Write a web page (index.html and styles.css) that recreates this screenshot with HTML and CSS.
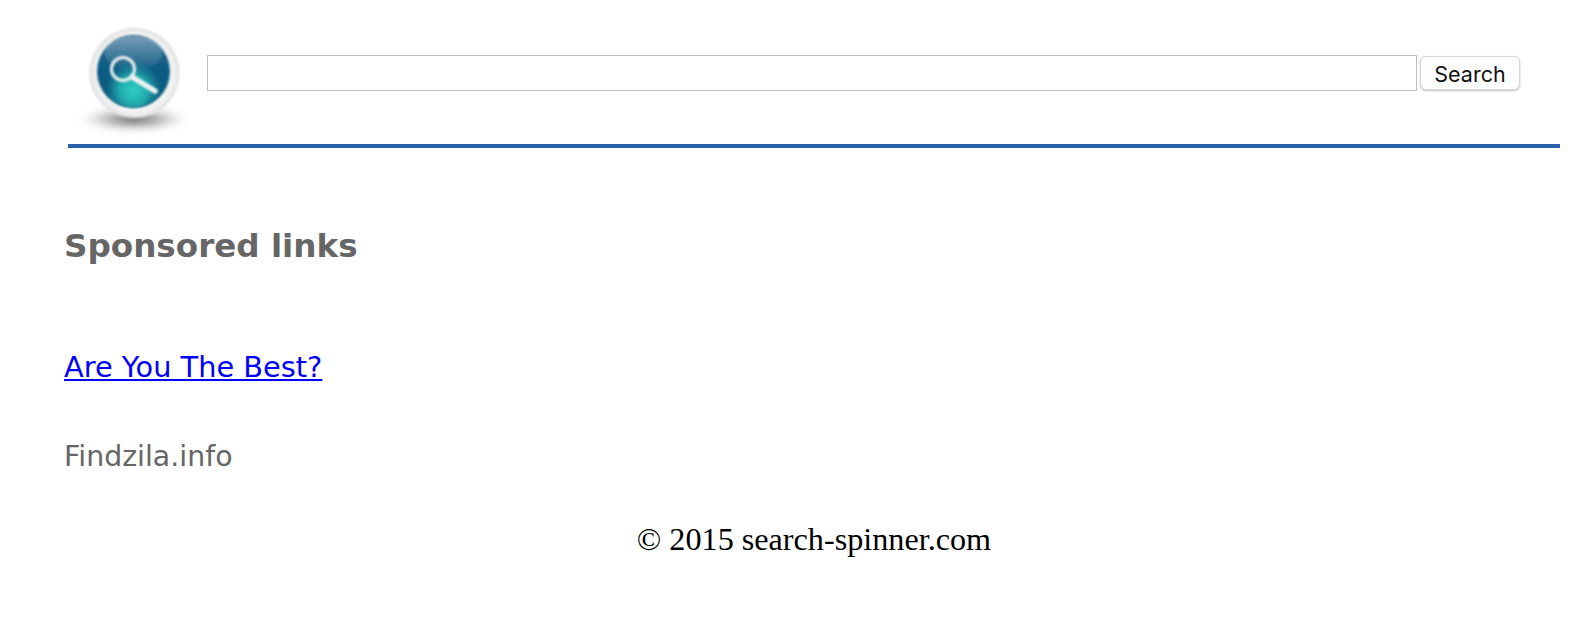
FILE: index.html
```html
<!DOCTYPE html>
<html lang="en">
<head>
  <meta charset="UTF-8" />
  <title>Search Spinner</title>
  <link rel="stylesheet" href="styles.css">
</head>
<body>
  <!-- Header -->
  <header class="header">
    <svg class="logo" width="136" height="120" viewBox="0 0 136 120">
      <defs>
        <radialGradient id="shadow" cx="50%" cy="50%" r="50%">
          <stop offset="0" stop-color="#666"/>
          <stop offset="0.45" stop-color="#999" stop-opacity="0.75"/>
          <stop offset="1" stop-color="#ccc" stop-opacity="0"/>
        </radialGradient>
        <radialGradient id="rim" cx="50%" cy="50%" r="50%">
          <stop offset="0.8" stop-color="#f6f6f6"/>
          <stop offset="0.93" stop-color="#ececec"/>
          <stop offset="1" stop-color="#dcdcdc"/>
        </radialGradient>
        <linearGradient id="ball" x1="0" y1="0" x2="0" y2="1">
          <stop offset="0" stop-color="#24628a"/>
          <stop offset="0.5" stop-color="#0d5c84"/>
          <stop offset="1" stop-color="#0e5878"/>
        </linearGradient>
        <radialGradient id="glow" cx="50%" cy="76%" r="40%">
          <stop offset="0" stop-color="#2fd0c2"/>
          <stop offset="0.5" stop-color="#25b8b4" stop-opacity="0.85"/>
          <stop offset="1" stop-color="#1a8fa0" stop-opacity="0"/>
        </radialGradient>
        <linearGradient id="gloss" x1="0" y1="0" x2="0" y2="1">
          <stop offset="0" stop-color="#fff" stop-opacity="0.38"/>
          <stop offset="1" stop-color="#fff" stop-opacity="0.02"/>
        </linearGradient>
        <filter id="soft"><feGaussianBlur stdDeviation="0.8"/></filter>
        <filter id="blur" x="-20%" y="-50%" width="140%" height="200%"><feGaussianBlur stdDeviation="3"/></filter>
      </defs>
      <ellipse cx="66" cy="99" rx="55" ry="13" fill="url(#shadow)" filter="url(#blur)"/>
      <circle cx="66.5" cy="53" r="45" fill="url(#rim)" filter="url(#soft)"/>
      <circle cx="65.5" cy="51.5" r="36.5" fill="url(#ball)" filter="url(#soft)"/>
      <circle cx="65.5" cy="51.5" r="36" fill="url(#glow)" filter="url(#soft)"/>
      <ellipse cx="65.5" cy="33" rx="29" ry="17" fill="url(#gloss)" filter="url(#soft)"/>
      <g fill="none" stroke="#eef3f3" filter="url(#soft)">
        <circle cx="55" cy="49" r="11.5" stroke-width="3"/>
        <path d="M64 57 L87 71" stroke-width="5.5" stroke-linecap="round"/>
      </g>
    </svg>
    <form class="search-form">
      <input type="text" class="search-input" />
      <button type="button" class="search-btn">Search</button>
    </form>
  </header>
  <!-- Links -->
  <section class="links">
    <h2>Sponsored links</h2>
    <a href="#" class="ad-link">Are You The Best?</a>
    <p class="ad-site">Findzila.info</p>
  </section>
  <!-- Footer -->
  <footer class="footer">&copy; 2015 search-spinner.com</footer>
</body>
</html>
```

FILE: styles.css
```css
/* Reset */
* {
  margin: 0;
  padding: 0;
  box-sizing: border-box;
}
body {
  background-color: #fff;
  font-family: 'Liberation Serif', serif;
}
/* Header */
.header {
  display: flex;
  align-items: flex-start;
  width: 1492px;
  height: 148px;
  margin-left: 68px;
  padding-top: 20px;
  border-bottom: 4px solid #2a60a8;
}
.logo {
  flex-shrink: 0;
}
.search-form {
  display: flex;
  align-items: center;
  gap: 3px;
  margin: 35px 0 0 3px;
}
.search-input {
  width: 1210px;
  height: 36px;
  border: 1px solid #bdbdbd;
  background-color: #fff;
}
.search-btn {
  width: 100px;
  height: 34px;
  background-color: #fff;
  border: 1px solid #d8d8d8;
  border-radius: 6px;
  box-shadow: 0 1px 2px rgba(0,0,0,0.25);
  font-family: Inter, sans-serif;
  font-size: 21.5px;
  padding-top: 1px;
  color: #111;
}
/* Links */
.links {
  padding: 78px 0 0 64px;
  font-family: 'DejaVu Sans', Verdana, sans-serif;
  color: #666;
}
.links h2 {
  font-size: 32.6px;
  line-height: 40px;
}
.ad-link {
  display: block;
  width: fit-content;
  margin-top: 83px;
  font-size: 28.8px;
  line-height: 36px;
  color: #00f;
}
.ad-site {
  margin-top: 54px;
  font-size: 28.4px;
  line-height: 36px;
}
.footer {
  margin-top: 44px;
  padding-left: 42px;
  text-align: center;
  font-size: 32.2px;
  line-height: 40px;
  color: #000;
}
```
